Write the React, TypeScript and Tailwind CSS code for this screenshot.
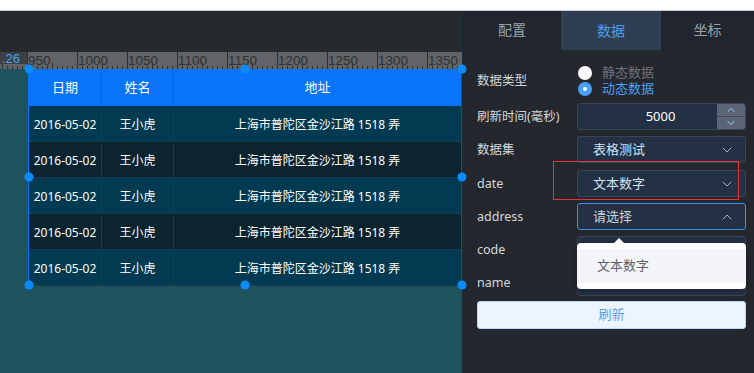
import { ChevronDown, ChevronUp } from "lucide-react";

const rows = [0, 1, 2, 3, 4];

function Ruler() {
  const ticks = [];
  for (let x = 2; x <= 462; x += 5) {
    const rel = x - 27;
    const h = rel % 50 === 0 ? 17 : rel % 25 === 0 ? 6 : 3;
    ticks.push(<line key={x} x1={x + 0.5} x2={x + 0.5} y1={17 - h} y2={17} stroke="#2e2f31" strokeWidth={1} />);
  }
  const labels = [950, 1000, 1050, 1100, 1150, 1200, 1250, 1300, 1350];
  return (
    <svg width="462" height="17" className="block">
      <rect width="462" height="17" fill="#616366" />
      <rect width="27" height="12" fill="#3c3f43" />
      {ticks}
      {labels.map((l, i) => (
        <text key={l} x={28 + i * 50} y={13} fontSize="13.5" fill="#2f3033" fontFamily="'Liberation Sans', sans-serif">
          {l}
        </text>
      ))}
      <text x={2} y={11} fontSize="13" fill="#4ea2f2" fontFamily="'Liberation Sans', sans-serif">
        .26
      </text>
    </svg>
  );
}

function Handle({ className }: { className: string }) {
  return <div className={`absolute w-[9px] h-[9px] rounded-full bg-[#0a8cff] -translate-x-1/2 -translate-y-1/2 ${className}`} />;
}

function Select({ value, open, placeholder }: { value?: string; open?: boolean; placeholder?: string }) {
  return (
    <div
      className={`h-[27px] w-[169px] rounded-[3px] border flex items-center justify-between pl-[15px] pr-[10px] bg-[#243044] ${
        open ? "border-[#3d8fe8]" : "border-[#394659]"
      }`}
    >
      <span className={`text-[13px] ${placeholder ? "text-[#c8d3dd]" : "text-[#cfe6f7]"}`}>{value ?? placeholder}</span>
      {open ? (
        <ChevronUp className="w-4 h-4 text-[#a9b4c0]" strokeWidth={1.5} />
      ) : (
        <ChevronDown className="w-4 h-4 text-[#a9b4c0]" strokeWidth={1.5} />
      )}
    </div>
  );
}

export default function App() {
  return (
    <div className="w-[754px] h-[373px] overflow-hidden bg-white font-['Noto_Sans','Noto_Sans_CJK_SC',sans-serif] flex flex-col">
      <div className="h-[11px] shrink-0 bg-white border-b border-[#c9ccd0]" />
      <div className="flex flex-1 min-h-0">
        {/* canvas */}
        <div className="w-[462px] shrink-0 flex flex-col bg-[#1d535c]">
          <div className="h-[41px] bg-[#26292e] shrink-0" />
          <Ruler />
          <div className="relative ml-[28px] mr-[1px] border-l border-[#0a74f8]">
            <div className="flex h-[37px] bg-[#0a74f8] text-white text-[13px]">
              <div className="w-[73px] flex items-center justify-center border-r border-[#0d66d4]">日期</div>
              <div className="w-[72px] flex items-center justify-center border-r border-[#0d66d4]">姓名</div>
              <div className="flex-1 flex items-center justify-center">地址</div>
            </div>
            {rows.map((i) => (
              <div
                key={i}
                className={`flex h-[36px] pt-[2px] text-[12px] text-white border-b border-[#173c4c] ${
                  i % 2 === 0 ? "bg-[#023a51]" : "bg-[#0b2430]"
                }`}
              >
                <div className="w-[73px] flex items-center justify-center border-r border-[#173c4c]">2016-05-02</div>
                <div className="w-[72px] flex items-center justify-center border-r border-[#173c4c]">王小虎</div>
                <div className="flex-1 flex items-center justify-center">上海市普陀区金沙江路 1518 弄</div>
              </div>
            ))}
            <Handle className="left-0 top-0" />
            <Handle className="left-[216px] top-0" />
            <Handle className="left-[433px] top-0" />
            <Handle className="left-0 top-[108px]" />
            <Handle className="left-[433px] top-[108px]" />
            <Handle className="left-0 top-[216px]" />
            <Handle className="left-[216px] top-[216px]" />
            <Handle className="left-[433px] top-[216px]" />
          </div>
        </div>

        {/* right panel */}
        <div className="flex-1 bg-[#24272e] border-l border-[#1c2a31] flex flex-col">
          <div className="flex h-[39px] bg-[#21262e] text-[14px] pb-[3px]">
            <div className="w-[98px] flex items-center justify-center text-[#9aa1a9]">配置</div>
            <div className="w-[100px] flex items-center justify-center bg-[#2f3e52] text-[#4c9ef2] -mb-[3px]">数据</div>
            <div className="flex-1 flex items-center justify-center text-[#9aa1a9]">坐标</div>
          </div>

          <div className="relative flex flex-col pl-[14px] pr-[7px] pt-[13px] text-[12.5px] text-[#d3d7dc]">
            <div className="flex items-center h-[36px]">
              <span className="w-[100px]">数据类型</span>
              <div className="flex flex-col gap-[2px] ml-[1px]">
                <div className="flex items-center gap-[10px] h-[14px]">
                  <div className="w-[14px] h-[14px] rounded-full bg-white" />
                  <span className="font-['Liberation_Sans','Noto_Sans_CJK_SC',sans-serif] text-[13px] leading-[14px] text-[#6d7178]">静态数据</span>
                </div>
                <div className="flex items-center gap-[10px] h-[14px]">
                  <div className="w-[14px] h-[14px] rounded-full bg-[#4a9ff5] flex items-center justify-center">
                    <div className="w-[4px] h-[4px] rounded-full bg-white" />
                  </div>
                  <span className="font-['Liberation_Sans','Noto_Sans_CJK_SC',sans-serif] text-[13px] leading-[14px] text-[#4a9ff5]">动态数据</span>
                </div>
              </div>
            </div>

            <div className="flex items-center h-[27px] mt-[4px]">
              <span className="w-[100px] pt-[2px]">刷新时间(毫秒)</span>
              <div className="h-[27px] w-[169px] rounded-[3px] border border-[#394659] bg-[#243044] flex">
                <div className="flex-1 flex items-center justify-center text-[13px] text-white pl-[26px]">5000</div>
                <div className="w-[28px] flex flex-col bg-[#5c6577] rounded-r-[3px]">
                  <div className="flex-1 flex items-center justify-center border-b border-[#3f4656]">
                    <ChevronUp className="w-3 h-3 text-[#9fd2ff]" strokeWidth={2} />
                  </div>
                  <div className="flex-1 flex items-center justify-center">
                    <ChevronDown className="w-3 h-3 text-[#9fd2ff]" strokeWidth={2} />
                  </div>
                </div>
              </div>
            </div>

            <div className="flex items-center h-[27px] mt-[6px]">
              <span className="w-[100px] pt-[2px]">数据集</span>
              <Select value="表格测试" />
            </div>

            <div className="relative flex items-center h-[27px] mt-[7px]">
              <span className="w-[100px] pt-[2px]">date</span>
              <Select value="文本数字" />
              <div className="absolute left-[76px] top-[-9px] w-[186px] h-[39px] border border-[#e0353a]" />
            </div>

            <div className="flex items-center h-[27px] mt-[6px]">
              <span className="w-[100px] pt-[2px]">address</span>
              <Select placeholder="请选择" open />
            </div>

            <div className="flex items-center h-[27px] mt-[6px]">
              <span className="w-[100px] pt-[2px]">code</span>
              <div className="h-[27px] w-[169px] rounded-[3px] border border-[#394659] bg-[#243044]" />
            </div>

            <div className="flex items-center h-[27px] mt-[6px]">
              <span className="w-[100px] pt-[2px]">name</span>
              <div className="h-[27px] w-[169px] rounded-[3px] border border-[#394659] bg-[#243044]" />
            </div>

            <button className="mt-[5px] h-[28px] w-[269px] rounded-[3px] border border-[#b3d8ff] bg-[#ecf5ff] text-[#5a9ff0] text-[13px]">
              刷新
            </button>

            {/* dropdown popover */}
            <div className="absolute left-[114px] top-[193px] w-[169px]">
              <div className="absolute left-[36px] -top-[5px] w-0 h-0 border-l-[6px] border-r-[6px] border-b-[6px] border-l-transparent border-r-transparent border-b-white" />
              <div className="bg-white rounded-[4px] py-[6px] shadow-[0_2px_8px_rgba(0,0,0,0.25)]">
                <div className="h-[34px] bg-[#f4f5f8] flex items-center pl-[20px] text-[13px] text-[#5f6266]">文本数字</div>
              </div>
            </div>
          </div>
        </div>
      </div>
    </div>
  );
}
